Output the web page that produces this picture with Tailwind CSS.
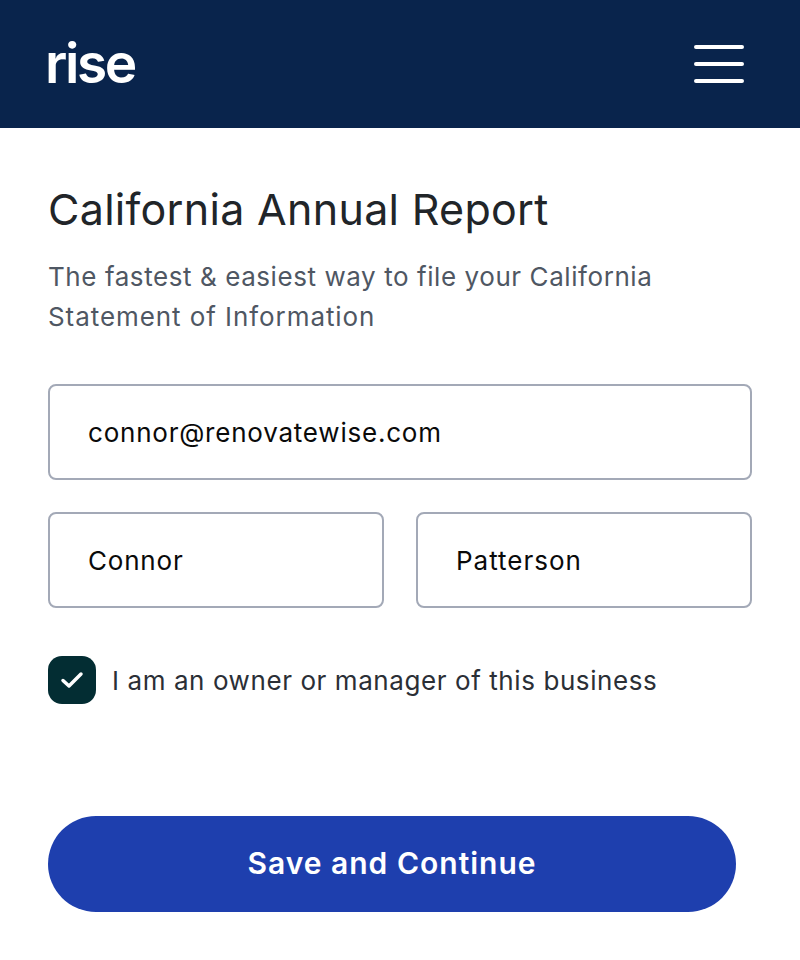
<!doctype html>
<html><head><meta charset="utf-8"><script src="https://cdn.jsdelivr.net/npm/@tailwindcss/browser@4"></script></head>
<body class="bg-white font-['Inter','Noto_Sans',sans-serif]">
<div class="w-[800px] h-[960px] flex flex-col">
<header class="h-[128px] bg-[#09244c] flex items-center justify-between pl-[45px] pr-[56px]">
<span class="text-white text-[55px] leading-none font-semibold tracking-[-2.4px] mt-[-2px]">rise</span>
<svg width="50" height="38" viewBox="0 0 50 38" class="-mt-[1px]"><g stroke="#fff" stroke-width="4" stroke-linecap="round"><path d="M2 2H48M2 19H48M2 36H48"/></g></svg>
</header>
<main class="flex-1 px-[48px] pt-[56px]">
<h1 class="text-[43px] leading-[50px] font-normal text-[#212529] tracking-[0.3px]">California Annual Report</h1>
<p class="mt-[23px] text-[26px] leading-[40px] text-[#4f5763] tracking-[0.57px]">The fastest &amp; easiest way to file your California<br><span class="tracking-[0.93px]">Statement of Information</span></p>
<div class="mt-[47px] h-[96px] border-2 border-[#a3a9b7] rounded-[8px] flex items-center pl-[38px] text-[26px] text-[#0a0a0a] tracking-[0.78px]">connor@renovatewise.com</div>
<div class="mt-[32px] grid grid-cols-2 gap-[32px]">
<div class="h-[96px] border-2 border-[#a3a9b7] rounded-[8px] flex items-center pl-[38px] text-[26px] text-[#0a0a0a] tracking-[0.8px]">Connor</div>
<div class="h-[96px] border-2 border-[#a3a9b7] rounded-[8px] flex items-center pl-[38px] text-[26px] text-[#0a0a0a] tracking-[1px]">Patterson</div>
</div>
<div class="mt-[48px] flex items-center gap-[16px]">
<div class="w-[48px] h-[48px] rounded-[14px] bg-[#032d33] flex items-center justify-center">
<svg width="24" height="20" viewBox="0 0 24 20"><path d="M3 10.5L9 16L21 4" fill="none" stroke="#fff" stroke-width="3.5" stroke-linecap="round" stroke-linejoin="round"/></svg>
</div>
<span class="text-[26px] text-[#2b2f36] tracking-[0.58px]">I am an owner or manager of this business</span>
</div>
<button class="mt-[112px] w-[688px] h-[96px] pb-[2px] rounded-[48px] bg-[#1e3fae] text-white text-[30px] font-semibold tracking-[1px] flex items-center justify-center">Save and Continue</button>
</main>
</div>
</body></html>
